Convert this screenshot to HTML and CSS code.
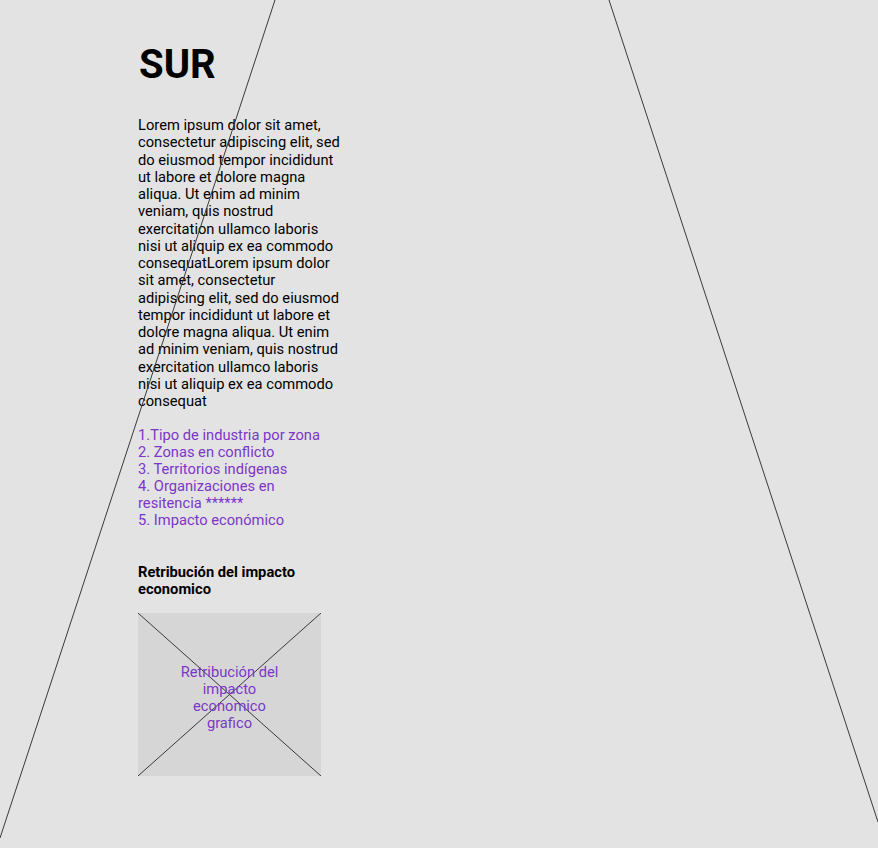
FILE: index.html
```html
<!DOCTYPE html>
<html lang="es">
<head>
<meta charset="utf-8">
<title>SUR</title>
<link rel="stylesheet" href="styles.css">
</head>
<body>
<svg class="bg-lines" width="878" height="848" viewBox="0 0 878 848" aria-hidden="true">
  <line x1="275" y1="0" x2="0" y2="838" />
  <line x1="609" y1="0" x2="878" y2="822" />
</svg>
<main class="page">
  <h1 class="title">SUR</h1>
  <p class="intro">Lorem ipsum dolor sit amet, consectetur adipiscing elit, sed do eiusmod tempor incididunt ut labore et dolore magna aliqua. Ut enim ad minim veniam, quis nostrud exercitation ullamco laboris nisi ut aliquip ex ea commodo consequatLorem ipsum dolor sit amet, consectetur adipiscing elit, sed do eiusmod tempor incididunt ut labore et dolore magna aliqua. Ut enim ad minim veniam, quis nostrud exercitation ullamco laboris nisi ut aliquip ex ea commodo consequat</p>
  <nav class="links">
    <a href="#">1.Tipo de industria por zona</a>
    <a href="#">2. Zonas en conflicto</a>
    <a href="#">3. Territorios indígenas</a>
    <a href="#">4. Organizaciones en resitencia ******</a>
    <a href="#">5. Impacto económico</a>
  </nav>
  <h2 class="subtitle">Retribución del impacto economico</h2>
  <div class="placeholder">
    <svg class="ph-x" viewBox="0 0 183 163" preserveAspectRatio="none" aria-hidden="true">
      <line x1="0" y1="0" x2="183" y2="163" />
      <line x1="183" y1="0" x2="0" y2="163" />
    </svg>
    <span class="ph-label">Retribución del impacto economico grafico</span>
  </div>
</main>
</body>
</html>
```
FILE: styles.css
```css
html, body {
  margin: 0;
  padding: 0;
  background: #e3e3e3;
}
body {
  font-family: Roboto, "Liberation Sans", sans-serif;
  color: #000;
  font-size: 14.7px;
  line-height: 17px;
  min-height: 848px;
  position: relative;
  overflow: hidden;
}
.bg-lines {
  position: absolute;
  left: 0;
  top: 0;
  pointer-events: none;
  z-index: 2;
}
.bg-lines line {
  stroke: #3a3a3a;
  stroke-width: 1;
}
.page {
  padding: 45px 0 0 138px;
  display: flex;
  flex-direction: column;
  align-items: flex-start;
}
.title {
  margin: 0;
  font-size: 40px;
  line-height: 40px;
  font-weight: 700;
  padding-left: 1px;
}
.intro {
  margin: 32px 0 0 0;
  width: 206px;
  line-height: 17.25px;
}
.links {
  margin-top: 17px;
  width: 190px;
  display: flex;
  flex-direction: column;
}
.links a {
  color: #7b36c9;
  text-decoration: none;
}
.subtitle {
  margin: 35px 0 0 0;
  font-size: 14.7px;
  line-height: 17px;
  font-weight: 700;
  width: 184px;
}
.placeholder {
  margin-top: 15px;
  width: 183px;
  height: 163px;
  background: #d6d6d6;
  position: relative;
  display: flex;
  align-items: center;
  justify-content: center;
}
.ph-x {
  position: absolute;
  inset: 0;
  width: 100%;
  height: 100%;
}
.ph-x line {
  stroke: #3a3a3a;
  stroke-width: 1;
}
.ph-label {
  position: relative;
  width: 110px;
  text-align: center;
  color: #7b36c9;
  margin-top: 7px;
}
```
